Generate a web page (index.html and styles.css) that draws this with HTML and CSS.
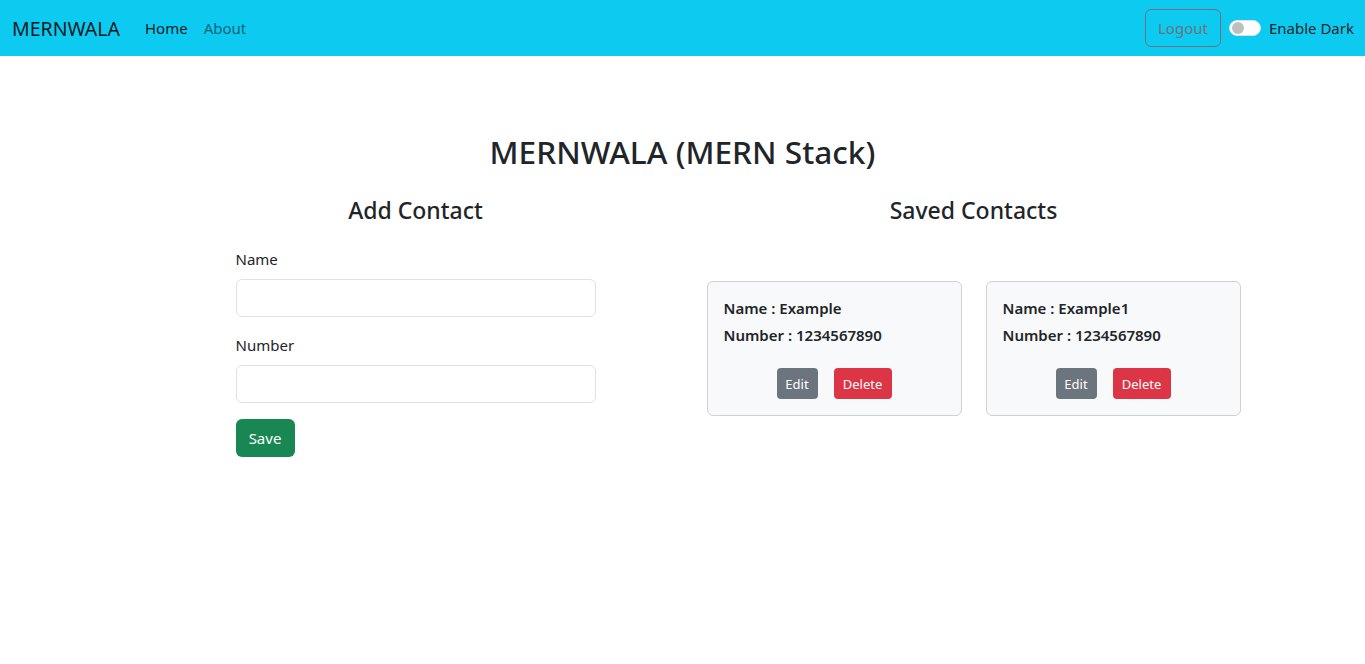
FILE: index.html
```html
<!DOCTYPE html>
<html lang="en">
<head>
<meta charset="utf-8">
<title>MERNWALA</title>
<link rel="stylesheet" href="styles.css">
</head>
<body>
<nav class="navbar">
  <div class="nav-left">
    <a class="brand" href="#">MERNWALA</a>
    <a class="nav-link active" href="#">Home</a>
    <a class="nav-link" href="#">About</a>
  </div>
  <div class="nav-right">
    <button class="btn-logout">Logout</button>
    <label class="switch">
      <span class="switch-track"><span class="switch-knob"></span></span>
      <span class="switch-label">Enable Dark</span>
    </label>
  </div>
</nav>
<main class="main">
  <h1 class="title">MERNWALA (MERN Stack)</h1>
  <div class="columns">
    <section class="col-left">
      <h3 class="section-title">Add Contact</h3>
      <form class="form">
        <label class="form-label">Name</label>
        <input class="form-control" type="text">
        <label class="form-label">Number</label>
        <input class="form-control" type="text">
        <button type="button" class="btn btn-save">Save</button>
      </form>
    </section>
    <section class="col-right">
      <h3 class="section-title">Saved Contacts</h3>
      <div class="cards">
        <div class="card">
          <p class="card-line">Name : Example</p>
          <p class="card-line">Number : 1234567890</p>
          <div class="card-actions">
            <button class="btn-sm btn-edit">Edit</button>
            <button class="btn-sm btn-delete">Delete</button>
          </div>
        </div>
        <div class="card">
          <p class="card-line">Name : Example1</p>
          <p class="card-line">Number : 1234567890</p>
          <div class="card-actions">
            <button class="btn-sm btn-edit">Edit</button>
            <button class="btn-sm btn-delete">Delete</button>
          </div>
        </div>
      </div>
    </section>
  </div>
</main>
</body>
</html>
```
FILE: styles.css
```css
* { box-sizing: border-box; }
body {
  margin: 0;
  font-family: "Noto Sans", "Open Sans", sans-serif;
  font-size: 15px;
  color: #212529;
  background: #fff;
}
.navbar {
  height: 56px;
  background: #0dcaf0;
  display: flex;
  align-items: center;
  justify-content: space-between;
  padding: 0 11px 0 12px;
}
.nav-left { display: flex; align-items: center; }
.brand {
  font-size: 19.5px;
  color: rgba(0,0,0,.9);
  text-decoration: none;
  margin-right: 25px;
}
.nav-link {
  font-size: 15px;
  color: rgba(0,0,0,.55);
  text-decoration: none;
  margin-right: 16px;
}
.nav-link.active { color: rgba(0,0,0,.9); }
.nav-right { display: flex; align-items: center; }
.btn-logout {
  height: 38px;
  width: 76px;
  border: 1px solid #6c757d;
  border-radius: 6px;
  background: transparent;
  color: #6c757d;
  font-family: inherit;
  font-size: 15px;
  padding: 0;
  margin-right: 8px;
}
.switch { display: flex; align-items: center; }
.switch-track {
  width: 32px;
  height: 16px;
  border-radius: 8px;
  background: #fff;
  border: 1px solid #dee2e6;
  display: flex;
  align-items: center;
  padding-left: 2px;
  margin-right: 8px;
}
.switch-knob {
  width: 12px; height: 12px; border-radius: 50%;
  background: #bfbfbf;
}
.switch-label { font-size: 15px; color: #212529; }

.main { padding-top: 76px; }
.title {
  margin: 0;
  text-align: center;
  font-size: 31.6px;
  font-weight: 500;
  line-height: 40px;
}
.columns {
  width: 1116px;
  margin: 22px auto 0;
  display: flex;
}
.col-left { width: 583px; }
.col-right { width: 534px; }
.section-title {
  margin: 0;
  text-align: center;
  font-size: 23px;
  font-weight: 500;
  line-height: 32px;
}
.form {
  width: 360px;
  margin: 21px auto 0;
  display: flex;
  flex-direction: column;
  align-items: flex-start;
}
.form-label {
  font-size: 15px;
  line-height: 24px;
  margin-bottom: 8px;
}
.form-control {
  width: 360px;
  height: 38px;
  border: 1px solid #dee2e6;
  border-radius: 6px;
  margin-bottom: 16px;
  font-family: inherit;
  font-size: 15px;
  padding: 6px 12px;
}
.btn-save {
  height: 38px;
  width: 59px;
  border: none;
  border-radius: 6px;
  background: #198754;
  color: #fff;
  font-family: inherit;
  font-size: 15px;
  padding: 0;
}
.cards {
  margin-top: 55px;
  display: flex;
  gap: 24px;
}
.card {
  width: 255px;
  height: 135px;
  background: #f8f9fa;
  border: 1px solid #cfd1d4;
  border-radius: 6px;
  padding: 13px 16px 0;
}
.card-line {
  margin: 0;
  font-size: 15px;
  font-weight: 600;
  line-height: 27px;
}
.card-actions {
  display: flex;
  justify-content: center;
  gap: 16px;
  margin-top: 19px;
}
.btn-sm {
  height: 31px;
  border: none;
  border-radius: 4px;
  color: #fff;
  font-family: inherit;
  font-size: 13px;
  padding: 0 8px;
}
.btn-edit { background: #6c757d; width: 41px; }
.btn-delete { background: #dc3545; width: 58px; }
```
